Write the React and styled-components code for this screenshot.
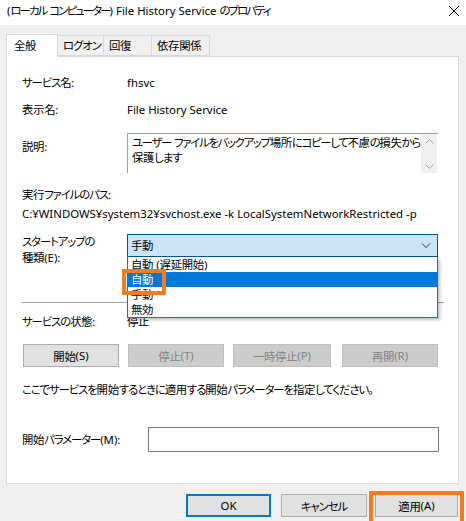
import React from "react";
import styled, { createGlobalStyle } from "styled-components";

const Global = createGlobalStyle`
  html, body { margin: 0; padding: 0; background: #f0f0f0; }
  body {
    font-family: "Noto Sans", "Noto Sans CJK JP", sans-serif;
    font-size: 11.4px;
    font-feature-settings: "palt" 1;
    color: #000;
  }
`;

/* Yu Gothic UI kana are much narrower than Noto CJK, so kana runs get tightened */
const Kana = styled.span`
  letter-spacing: ${(p) => p.$ls ?? -1.1}px;
`;

const Kanji = styled.span`
  letter-spacing: -0.3px;
`;

const KANA_RE = /([\u3000-\u30ff\uff00-\uffef]+)/;
const KANJI_RE = /([\u4e00-\u9fff]+)/;

const T = ({ children, ls }) =>
  String(children)
    .split(KANA_RE)
    .flatMap((part) => (KANA_RE.test(part) ? [part] : part.split(KANJI_RE)))
    .filter(Boolean)
    .map((part, i) =>
      KANA_RE.test(part) ? (
        <Kana key={i} $ls={ls}>
          {part}
        </Kana>
      ) : KANJI_RE.test(part) ? (
        <Kanji key={i}>{part}</Kanji>
      ) : (
        <span key={i}>{part}</span>
      )
    );

const Window = styled.div`
  width: 466px;
  height: 521px;
  background: #f0f0f0;
  display: flex;
  flex-direction: column;
  overflow: hidden;
`;

const TitleBar = styled.div`
  height: 25px;
  background: #fff;
  display: flex;
  align-items: flex-start;
  justify-content: space-between;
  padding: 3px 5px 0 7px;
  box-sizing: border-box;
  line-height: 16px;
  white-space: nowrap;
`;

const Close = styled.div`
  width: 12px;
  height: 12px;
  margin-top: 2px;
  margin-right: 1px;
`;

const Tabs = styled.div`
  display: flex;
  align-items: flex-end;
  margin: 9px 0 0 6px;
  height: 22px;
  position: relative;
  z-index: 1;
`;

const Tab = styled.div`
  box-sizing: border-box;
  width: ${(p) => p.$w}px;
  height: ${(p) => (p.$active ? 23 : 21)}px;
  border: 1px solid #d9d9d9;
  border-bottom: ${(p) => (p.$active ? "none" : "1px solid #d9d9d9")};
  margin-left: ${(p) => (p.$first ? 0 : -1)}px;
  background: ${(p) => (p.$active ? "#fff" : "#f0f0f0")};
  padding: ${(p) => (p.$active ? "3px 0 0 7px" : "2px 0 0 5px")};
  line-height: 16px;
  white-space: nowrap;
  margin-bottom: ${(p) => (p.$active ? -1 : 0)}px;
`;

const Panel = styled.div`
  margin: 0 7px 0 6px;
  height: 428px;
  box-sizing: border-box;
  border: 1px solid #d9d9d9;
  background: #fff;
  padding: 18px 0 0 15px;
  position: relative;
`;

const Row = styled.div`
  display: flex;
  align-items: ${(p) => p.$align || "center"};
  margin-top: ${(p) => p.$mt || 0}px;
  line-height: 16px;
`;

const Label = styled.div`
  width: ${(p) => p.$w || 105}px;
  flex-shrink: 0;
  padding-top: ${(p) => p.$pt || 0}px;
  line-height: 16px;
  white-space: nowrap;
`;

const Line = styled.div`
  margin-top: ${(p) => p.$mt || 0}px;
  line-height: 16px;
  white-space: nowrap;
`;

const TextArea = styled.div`
  width: 311px;
  height: 40px;
  box-sizing: border-box;
  border-left: 1px solid #a0a0a0;
  border-top: 1px solid #a0a0a0;
  display: flex;
  overflow: hidden;
`;

const AreaText = styled.div`
  flex: 1;
  min-width: 0;
  padding: 1px 0 0 4px;
  line-height: 15px;
  white-space: nowrap;
`;

const ScrollBar = styled.div`
  width: 16px;
  flex-shrink: 0;
  margin-right: 1px;
  background: #f0f0f0;
  display: flex;
  flex-direction: column;
  justify-content: space-between;
  align-items: center;
  padding: 5px 0 4px;
  box-sizing: border-box;
`;

const SelectWrap = styled.div`
  position: relative;
  width: 311px;
`;

const Select = styled.div`
  height: 23px;
  box-sizing: border-box;
  background: #cce4f7;
  border: 1px solid #005499;
  display: flex;
  align-items: center;
  justify-content: space-between;
  padding: 0 6px 0 3px;
`;

const List = styled.div`
  position: absolute;
  left: 0;
  top: 23px;
  width: 311px;
  box-sizing: border-box;
  border: 1px solid #0078d7;
  border-top: none;
  background: #fff;
  box-shadow: 2px 2px 3px rgba(0, 0, 0, 0.25);
  z-index: 3;
`;

const Item = styled.div`
  height: 15px;
  line-height: 15px;
  padding-left: 3px;
  background: ${(p) => (p.$sel ? "#0078d7" : "#fff")};
  color: ${(p) => (p.$sel ? "#fff" : "#000")};
`;

const Highlight = styled.div`
  position: absolute;
  box-sizing: border-box;
  border: 4px solid #f47c20;
  left: ${(p) => p.$x}px;
  top: ${(p) => p.$y}px;
  width: ${(p) => p.$w}px;
  height: ${(p) => p.$h}px;
  z-index: 4;
  pointer-events: none;
`;

const Separator = styled.div`
  height: 1px;
  background: #a0a0a0;
  margin: 36px 14px 0 0;
`;

const ButtonRow = styled.div`
  display: flex;
  margin-top: ${(p) => p.$mt || 0}px;
`;

const Button = styled.div`
  width: ${(p) => p.$w}px;
  height: 23px;
  box-sizing: border-box;
  display: flex;
  align-items: center;
  justify-content: center;
  background: ${(p) => (p.$disabled ? "#cccccc" : "#e1e1e1")};
  border: ${(p) =>
    p.$default ? "2px solid #0078d7" : p.$disabled ? "1px solid #bfbfbf" : "1px solid #adadad"};
  color: ${(p) => (p.$disabled ? "#838383" : "#000")};
  margin-left: ${(p) => p.$ml || 0}px;
  white-space: nowrap;
`;

const Input = styled.div`
  width: 291px;
  height: 25px;
  box-sizing: border-box;
  border: 1px solid #7a7a7a;
  background: #fff;
`;

const Footer = styled.div`
  display: flex;
  justify-content: flex-end;
  padding: 10px 8px 0 0;
  position: relative;
`;

const Chevron = () => (
  <svg width="10" height="6" viewBox="0 0 10 6">
    <path d="M1 0.5 L5 4.5 L9 0.5" fill="none" stroke="#333" strokeWidth="1" />
  </svg>
);

const SmallArrow = ({ up }) => (
  <svg width="9" height="5" viewBox="0 0 9 5">
    <path
      d={up ? "M0.5 4.5 L4.5 0.5 L8.5 4.5" : "M0.5 0.5 L4.5 4.5 L8.5 0.5"}
      fill="none"
      stroke="#a3a3a3"
      strokeWidth="1"
    />
  </svg>
);

const startupOptions = ["自動 (遅延開始)", "自動", "手動", "無効"];
const serviceButtons = [
  { label: "開始(S)", w: 96, ml: 1 },
  { label: "停止(T)", w: 96, ml: 9, disabled: true },
  { label: "一時停止(P)", w: 98, ml: 9, disabled: true },
  { label: "再開(R)", w: 96, ml: 11, disabled: true },
];

export default function App() {
  return (
    <Window>
      <Global />
      <TitleBar>
        <span>
          <T ls={-1.9}>(ローカル コンピューター) File History Service のプロパティ</T>
        </span>
        <Close>
          <svg width="12" height="12" viewBox="0 0 12 12">
            <path d="M1 1 L11 11 M11 1 L1 11" stroke="#000" strokeWidth="1" />
          </svg>
        </Close>
      </TitleBar>

      <Tabs>
        <Tab $w={52} $active $first><T>全般</T></Tab>
        <Tab $w={47}><T>ログオン</T></Tab>
        <Tab $w={49}><T>回復</T></Tab>
        <Tab $w={59}><T>依存関係</T></Tab>
      </Tabs>

      <Panel>
        <Row>
          <Label><T>サービス名:</T></Label>
          <Line>fhsvc</Line>
        </Row>
        <Row $mt={11}>
          <Label><T>表示名:</T></Label>
          <Line>File History Service</Line>
        </Row>
        <Row $mt={15} $align="flex-start">
          <Label $pt={6}><T>説明:</T></Label>
          <TextArea>
            <AreaText>
              <T ls={-1.3}>ユーザー ファイルをバックアップ場所にコピーして不慮の損失から</T>
              <br />
              <T>保護します</T>
            </AreaText>
            <ScrollBar>
              <SmallArrow up />
              <SmallArrow />
            </ScrollBar>
          </TextArea>
        </Row>
        <Line $mt={14}><T>実行ファイルのパス:</T></Line>
        <Line $mt={3}>C:¥WINDOWS¥system32¥svchost.exe -k LocalSystemNetworkRestricted -p</Line>

        <Row $mt={12} $align="flex-start">
          <Label>
            <T>スタートアップの</T>
            <br />
            <T>種類(E):</T>
          </Label>
          <SelectWrap>
            <Select>
              <span><T>手動</T></span>
              <Chevron />
            </Select>
            <List>
              {startupOptions.map((o, i) => (
                <Item key={o} $sel={i === 1}>
                  <T>{o}</T>
                </Item>
              ))}
            </List>
            <Highlight $x={-5} $y={35} $w={44} $h={26} />
          </SelectWrap>
        </Row>

        <Separator />

        <Row $mt={11}>
          <Label><T>サービスの状態:</T></Label>
          <Line><T>停止</T></Line>
        </Row>

        <ButtonRow $mt={14}>
          {serviceButtons.map((b) => (
            <Button key={b.label} $w={b.w} $ml={b.ml} $disabled={b.disabled}>
              <T>{b.label}</T>
            </Button>
          ))}
        </ButtonRow>

        <Line $mt={15}>
          <T>ここでサービスを開始するときに適用する開始パラメーターを指定してください。</T>
        </Line>

        <Row $mt={29}>
          <Label $w={126}><T>開始パラメーター(M):</T></Label>
          <Input />
        </Row>
      </Panel>

      <Footer>
        <Button $w={85} $default>OK</Button>
        <Button $w={86} $ml={10}><T>キャンセル</T></Button>
        <Button $w={83} $ml={8}><T>適用(A)</T></Button>
        <Highlight $x={369} $y={7} $w={95} $h={34} />
      </Footer>
    </Window>
  );
}
